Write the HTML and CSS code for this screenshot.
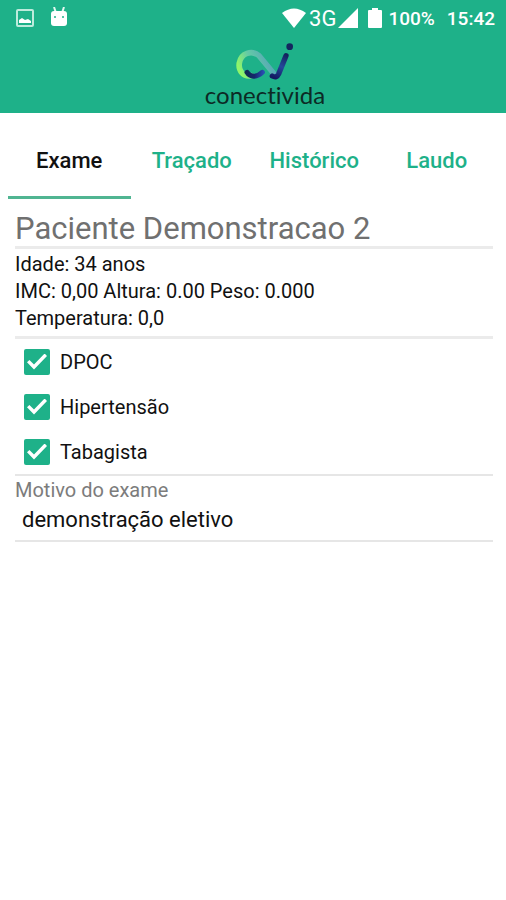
FILE: index.html
```html
<!DOCTYPE html>
<html lang="pt-BR">
  <head>
    <meta charset="utf-8">
    <meta name="viewport" content="width=device-width, initial-scale=1">
    <title>Conectivida - Exame</title>
    <link rel="stylesheet" href="styles.css">
  </head>
  <body>
    <header class="app-header">
      <div class="status-bar">
        <svg width="18" height="18" viewBox="0 0 18 18" aria-hidden="true">
          <rect x="1" y="1" width="16" height="16" rx="1" fill="none" stroke="#bdebdc" stroke-width="2"/>
          <path d="M3 14v-3l3-2 3 2 3-1 3 2v2z" fill="#fff"/>
        </svg>
        <svg width="18" height="22" viewBox="0 0 18 22" aria-hidden="true">
          <path d="M4 0l2 6M14 0l-2 6" stroke="#e3f8f1" stroke-width="2"/>
          <rect x="1" y="4" width="16" height="15" rx="3" fill="#fff"/>
          <circle cx="5" cy="10" r="1" fill="#1eb189"/>
          <circle cx="13" cy="10" r="1" fill="#1eb189"/>
        </svg>
        <div class="status-right">
          <svg width="26" height="20" viewBox="0 0 26 20" aria-hidden="true">
            <path d="M1 5Q13-4 25 5L13 20z" fill="#fff"/>
          </svg>
          <span class="network">3G</span>
          <svg width="20" height="20" viewBox="0 0 20 20" aria-hidden="true">
            <path d="M20 0v20H0z" fill="#fff"/>
          </svg>
          <svg class="battery" width="14" height="20" viewBox="0 0 14 20" aria-hidden="true">
            <path d="M4 0h6v2h3q1 0 1 1v16q0 1-1 1H1q-1 0-1-1V3q0-1 1-1h3z" fill="#fff"/>
          </svg>
          <span class="charge">100%</span>
          <span class="clock">15:42</span>
        </div>
      </div>
      <div class="brand">
        <svg width="60" height="38" viewBox="0 0 180 114" fill="none" stroke-linecap="round" aria-hidden="true">
          <defs>
            <linearGradient id="loop" gradientUnits="userSpaceOnUse" x1="20" y1="90" x2="110" y2="50">
              <stop offset="0" stop-color="#8ff56a"/>
              <stop offset="0.4" stop-color="#65cba5"/>
              <stop offset="1" stop-color="#55a5b8"/>
            </linearGradient>
            <linearGradient id="tail" gradientUnits="userSpaceOnUse" x1="35" y1="85" x2="85" y2="90">
              <stop offset="0" stop-color="#102a54"/>
              <stop offset="0.5" stop-color="#15286c"/>
              <stop offset="1" stop-color="#284fb0"/>
            </linearGradient>
            <linearGradient id="stem" gradientUnits="userSpaceOnUse" x1="120" y1="105" x2="155" y2="35">
              <stop offset="0" stop-color="#131a62"/>
              <stop offset="0.5" stop-color="#24489b"/>
              <stop offset="1" stop-color="#12235c"/>
            </linearGradient>
          </defs>
          <path d="M48 98C26 102 9 84 13 60C18 30 50 20 72 38L120 96" stroke="url(#loop)" stroke-width="17"/>
          <path d="M36 88C46 105 68 102 82 88" stroke="url(#tail)" stroke-width="15"/>
          <path d="M112 99Q125 106 131 93L153 38" stroke="url(#stem)" stroke-width="16"/>
          <circle cx="164" cy="11" r="10" fill="#14265f"/>
        </svg>
        <span class="brand-name">conectivida</span>
      </div>
    </header>

    <nav class="tabs">
      <a class="tab active" href="#exame" aria-current="page">Exame</a>
      <a class="tab" href="#tracado">Traçado</a>
      <a class="tab" href="#historico">Histórico</a>
      <a class="tab" href="#laudo">Laudo</a>
    </nav>

    <main class="exam" id="exame">
      <h1 class="patient">Paciente Demonstracao 2</h1>
      <div class="section details">
        <p>Idade: 34 anos</p>
        <p>IMC: 0,00 Altura: 0.00 Peso: 0.000</p>
        <p>Temperatura: 0,0</p>
      </div>
      <div class="section conditions">
        <label class="condition"><input type="checkbox" name="dpoc" checked>DPOC</label>
        <label class="condition"><input type="checkbox" name="hipertensao" checked>Hipertensão</label>
        <label class="condition"><input type="checkbox" name="tabagista" checked>Tabagista</label>
      </div>
      <div class="reason">
        <label for="motivo">Motivo do exame</label>
        <input id="motivo" type="text" name="motivo" value="demonstração eletivo">
      </div>
    </main>
  </body>
</html>
```

FILE: styles.css
```css
* {
  box-sizing: border-box;
}
body {
  margin: 0;
  background-color: #fff;
  color: #111;
  font-family: Roboto, "Liberation Sans", sans-serif;
  font-size: 20px;
}
h1, p {
  margin: 0;
}

/* header */
.app-header {
  background-color: #1eb189;
  padding-bottom: 5px;
}
.status-bar {
  display: flex;
  align-items: center;
  gap: 16px;
  height: 36px;
  padding: 0 11px 0 16px;
  color: #fff;
}
.status-right {
  display: flex;
  align-items: center;
  gap: 2px;
  margin-left: auto;
  font-size: 19px;
  font-weight: 500;
}
.network {
  font-size: 22px;
  font-weight: 400;
}
.battery {
  margin-left: 8px;
}
.charge {
  margin-left: 4px;
}
.clock {
  margin-left: 10px;
}
.brand {
  display: flex;
  flex-direction: column;
  align-items: center;
  padding: 7px 0 0 24px;
}
.brand-name {
  color: #0c2a25;
  font-family: Lato, sans-serif;
  font-size: 24px;
  font-variant-ligatures: none;
  line-height: 27px;
}

/* tabs */
.tabs {
  display: flex;
  padding: 0 8px;
}
.tab {
  flex: 1;
  height: 86px;
  padding-top: 4px;
  border-bottom: 3px solid transparent;
  color: #1eb189;
  font-size: 22px;
  font-weight: 500;
  line-height: 88px;
  text-align: center;
  text-decoration: none;
}
.tab.active {
  border-color: #50b592;
  color: #111;
}

/* exam */
.exam {
  padding: 12px 13px 0 15px;
}
.patient {
  color: #707070;
  font-size: 31px;
  font-weight: 400;
  line-height: 35px;
}
.section {
  border-top: 3px solid #ebebeb;
}
.details {
  padding: 2px 0 4px;
  line-height: 27px;
}
.condition {
  display: flex;
  align-items: center;
  gap: 10px;
  height: 45px;
  padding-left: 9px;
}
.condition input {
  display: grid;
  place-items: center;
  width: 26px;
  height: 26px;
  margin: 0;
  border-radius: 2px;
  background-color: #c4c4c4;
  appearance: none;
}
.condition input:checked {
  background-color: #1eb189;
}
.condition input:checked::before {
  content: "";
  width: 20px;
  height: 16px;
  background-color: #fff;
  clip-path: polygon(0 55%, 12% 40%, 35% 68%, 88% 0, 100% 16%, 35% 100%);
}
.reason {
  border-top: 2px solid #e6e6e6;
  border-bottom: 2px solid #e6e6e6;
}
.reason label {
  display: block;
  color: #7c7c7c;
  line-height: 28px;
}
.reason input {
  display: block;
  width: 100%;
  height: 36px;
  padding: 0 7px 6px;
  border: none;
  background: none;
  color: #111;
  font: inherit;
  font-size: 22px;
}
```
